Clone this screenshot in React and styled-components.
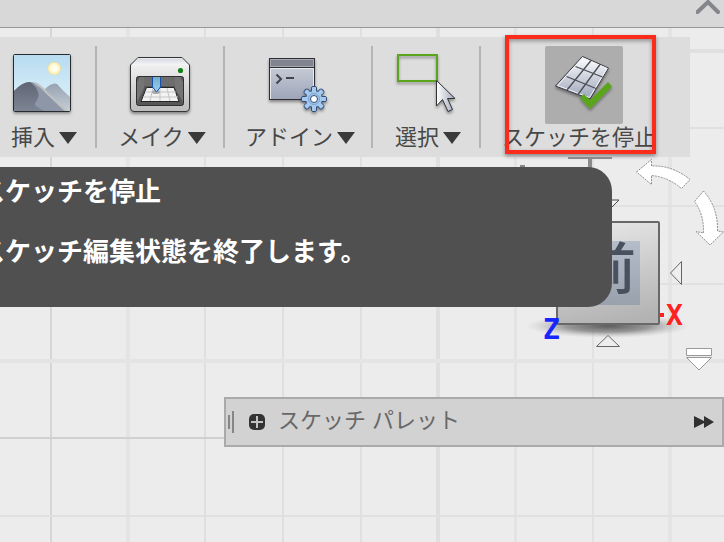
import React from "react";
import styled, { createGlobalStyle } from "styled-components";

const Global = createGlobalStyle`
  * { box-sizing: border-box; }
  body {
    margin: 0;
    overflow-x: hidden;
    background: #ececec;
    font-family: "Liberation Sans", "Noto Sans CJK JP", sans-serif;
  }
`;

const Page = styled.div`
  display: flex;
  flex-direction: column;
  min-height: 100vh;
`;

const TopBar = styled.header`
  display: flex;
  justify-content: flex-end;
  height: 28px;
  padding-right: 4px;
  background: #d8d8d8;
  border-bottom: 1px solid #969696;
`;

const PlainButton = styled.button`
  padding: 0;
  border: 0;
  background: none;
  color: inherit;
  font: inherit;
  cursor: pointer;
`;

const CollapseButton = styled(PlainButton)`
  display: flex;
  align-items: flex-start;
  width: 24px;
`;

const Workspace = styled.main`
  position: relative;
  flex: 1;
  padding-top: 9px;
  overflow: hidden;
`;

const Grid = styled.svg`
  position: absolute;
  inset: 0;
  width: 100%;
  height: 100%;
`;

const Toolbar = styled.nav`
  position: relative;
  display: grid;
  grid-template-columns: 97px 128px 148px 108px 1fr;
  margin-right: 34px;
  padding: 9px 0;
  background: #dddddd;
`;

const Tool = styled(PlainButton)`
  display: flex;
  flex-direction: column;
  align-items: center;
  height: 102px;
  padding-right: ${(p) => p.$inset || 0}px;
  border-right: ${(p) => (p.$last ? "0" : "2px solid #b5b5b5")};
  color: #484848;
  font-size: 22px;
  line-height: 28px;
  white-space: nowrap;
`;

const Tile = styled.svg`
  display: block;
  width: 78px;
  height: 78px;
  flex: none;
  border-radius: 2px;
  background: ${(p) => (p.$active ? "#adadad" : "none")};
`;

const Label = styled.span`
  display: flex;
  align-items: center;
  gap: 4px;
  padding-left: ${(p) => (p.$wide ? 0 : 4)}px;
  padding-right: ${(p) => (p.$wide ? 10 : 0)}px;
`;

const Caret = styled.span`
  width: 18px;
  height: 12px;
  background: #3a3a3a;
  clip-path: polygon(0 0, 100% 0, 50% 100%);
`;

const Highlight = styled.div`
  position: absolute;
  top: -2px;
  right: 34px;
  width: 151px;
  height: 119px;
  border: 4px solid #fb2c1c;
  box-shadow: 0 2px 4px rgba(0, 0, 0, 0.4), inset 0 2px 4px rgba(0, 0, 0, 0.35);
  pointer-events: none;
`;

const Tooltip = styled.div`
  position: absolute;
  top: 139px;
  left: -40px;
  right: 112px;
  height: 140px;
  padding: 10px 19px;
  border-radius: 0 24px 24px 0;
  background: #505050;
  color: #fff;
  font-size: 26px;
  font-weight: 700;
  line-height: 30px;
  white-space: nowrap;
`;

const TipTitle = styled.h1`
  margin: 0 0 30px;
  font: inherit;
`;

const TipText = styled.p`
  margin: 0;
`;

const Cube = styled.svg`
  position: absolute;
  top: 129px;
  right: 0;
  width: 224px;
  height: 223px;
  font-family: "Noto Sans CJK JP", sans-serif;
`;

const Palette = styled.section`
  position: relative;
  display: flex;
  align-items: center;
  height: 50px;
  margin: 240px 0 0 224px;
  padding: 0 8px 0 2px;
  border: 2px solid #aaaaaa;
  background: #d2d2d2;
  color: #686868;
`;

const Grip = styled.span`
  display: flex;
  align-items: center;
  gap: 2px;
  margin-right: 15px;

  &::before,
  &::after {
    content: "";
    width: 2px;
    height: 14px;
    background: #868686;
  }
  &::after { height: 22px; }
`;

const PaletteTitle = styled.h2`
  flex: 1;
  margin: 0 0 2px 13px;
  font-size: 22px;
  font-weight: 400;
  line-height: 26px;
`;

const IconButton = styled(PlainButton)`
  display: flex;
`;

const verticals = [
  [50, 2, "#d6d6d6"], [126, 4, "#e4e4e4"], [204, 2, "#dfdfdf"],
  [282, 2, "#dfdfdf"], [360, 2, "#e0e0e0"], [436, 4, "#dfdfdf"],
  [514, 3, "#e3e3e3"], [592, 2, "#e1e1e1"], [668, 4, "#e4e4e4"],
];
const horizontals = [
  [21, 4, "#e0e0e0"], [99, 2, "#e0e0e0"], [177, 2, "#e1e1e1"],
  [255, 2, "#e1e1e1"], [331, 4, "#e4e4e4"], [409, 2, "#d0d0d0"],
  [487, 2, "#e0e0e0"],
];

function GridLines() {
  return (
    <Grid aria-hidden="true">
      {verticals.map(([x, w, c]) => (
        <rect key={x} x={x} y="0" width={w} height="100%" fill={c} />
      ))}
      {horizontals.map(([y, h, c]) => (
        <rect key={y} x="0" y={y} width="100%" height={h} fill={c} />
      ))}
    </Grid>
  );
}

const Shadow = ({ id }) => (
  <filter id={id} x="-20%" y="-20%" width="140%" height="150%">
    <feDropShadow dx="0" dy="2" stdDeviation="1.5" floodOpacity="0.4" />
  </filter>
);

const Fade = ({ id, from, to }) => (
  <linearGradient id={id} x1="0" y1="0" x2="0" y2="1">
    <stop offset="0" stopColor={from} />
    <stop offset="1" stopColor={to} />
  </linearGradient>
);

function InsertIcon() {
  return (
    <Tile viewBox="3 46 78 78" aria-hidden="true">
      <defs>
        <Shadow id="s1" />
        <Fade id="sky" from="#b7dbf0" to="#e3f4fb" />
        <Fade id="hill" from="#5f6573" to="#7d8494" />
        <Fade id="far" from="#97a3b2" to="#c6ced6" />
        <radialGradient id="sun">
          <stop offset="0.4" stopColor="#fffdf0" />
          <stop offset="0.85" stopColor="#fff0b0" />
          <stop offset="1" stopColor="#ead994" />
        </radialGradient>
      </defs>
      <rect x="13.5" y="54.5" width="57" height="57" fill="url(#sky)" filter="url(#s1)" />
      <circle cx="54.3" cy="68.5" r="6.6" fill="url(#sun)" />
      <path d="M44 90Q52 82 57 84Q62 90 70 97V111H50Z" fill="url(#far)" />
      <path d="M29 82Q36 82 41 87L67 111H14V91Q22 83 29 82Z" fill="#8e97a8" />
      <path d="M14 91Q22 82 30 82Q36 86 38 92Q40 97 35 103Q33 106 45 111H14Z" fill="url(#hill)" />
      <path d="M35 83Q41 86 47 93L66 111" fill="none" stroke="#c0c2c2" strokeWidth="2" />
      <rect x="13.5" y="54.5" width="57" height="57" rx="1" fill="none" stroke="#282a2d" />
    </Tile>
  );
}

function MakeIcon() {
  return (
    <Tile viewBox="121 46 78 78" aria-hidden="true">
      <defs>
        <Shadow id="s2" />
        <Fade id="body" from="#f8f8f8" to="#bcbcbc" />
        <Fade id="lid" from="#d5d9e2" to="#f5f5f7" />
        <Fade id="nozzle" from="#74abc8" to="#9bd2ee" />
      </defs>
      <path d="M138 57.5H182L189.5 65V108Q189.5 111.500 186 111.500H134Q130.500 111.500 130.500 108V65Z" fill="url(#body)" stroke="#353535" filter="url(#s2)" />
      <path d="M138 58.500H182L188 65H132Z" fill="url(#lid)" />
      <circle cx="180.500" cy="70.500" r="2.600" fill="#158015" />
      <rect x="136.500" y="76.500" width="47" height="29" rx="2" fill="#575757" stroke="#303030" />
      <path d="M144 77H176V86H144Z" fill="#6d6d6d" />
      <path d="M137 102L144 88V77H140L137 82ZM183 102L175 88V77H180L183 82Z" fill="#757575" />
      <path d="M146.500 87.500H174L179 101.500H141Z" fill="#f2f2f2" stroke="#252525" />
      <path d="M145 92H176M143 97H178M153 88L150 101M160 88V101M167 88L170 101" stroke="#c5c5c5" strokeWidth="1" />
      <ellipse cx="156" cy="92" rx="4" ry="2" fill="#a8a8a8" />
      <path d="M152.500 77V87L156.500 92L160.500 87V77" fill="url(#nozzle)" stroke="#174fae" />
    </Tile>
  );
}

function AddinIcon() {
  const teeth = [0, 45, 90, 135, 180, 225, 270, 315];
  return (
    <Tile viewBox="259 46 78 78" aria-hidden="true">
      <defs>
        <Shadow id="s3" />
        <Fade id="term" from="#d2d5df" to="#9da5b8" />
      </defs>
      <g filter="url(#s3)">
        <rect x="269.500" y="58.500" width="45" height="41" fill="url(#term)" stroke="#2d2f35" />
      </g>
      <rect x="270.500" y="59.500" width="43" height="7" fill="#81848f" stroke="#a6a8b2" />
      <path d="M270 67.500H314" stroke="#2d2f35" />
      <path d="M270.500 99V68.500H313.500V99" fill="none" stroke="#e8eaf0" />
      <path d="M276.500 74.500L281 79L276.500 83.500M286 78H294" fill="none" stroke="#42444b" strokeWidth="2" />
      <g filter="url(#s3)">
        {teeth.map((a) => (
          <rect key={a} x="311.500" y="86.500" width="5" height="9" rx="1.500" fill="#a6c9ed" stroke="#304b77" transform={`rotate(${a} 314 99)`} />
        ))}
        <circle cx="314" cy="99" r="8.500" fill="#9dc2e8" stroke="#304b77" />
        {teeth.map((a) => (
          <rect key={a} x="312" y="87.500" width="4" height="7" fill="#a6c9ed" transform={`rotate(${a} 314 99)`} />
        ))}
      </g>
      <circle cx="314" cy="99" r="5.500" fill="none" stroke="#78a2d0" />
      <circle cx="314" cy="99" r="3.500" fill="#fff" stroke="#304b77" />
    </Tile>
  );
}

function SelectIcon() {
  return (
    <Tile viewBox="387 46 78 78" aria-hidden="true">
      <defs>
        <Shadow id="s4" />
        <linearGradient id="pointer">
          <stop offset="0" stopColor="#ffffff" />
          <stop offset="1" stopColor="#9fa7b9" />
        </linearGradient>
      </defs>
      <rect x="398" y="55" width="39" height="26" fill="none" stroke="#5aa51e" strokeWidth="2" filter="url(#s4)" />
      <path d="M436.500 80.500V106L442.500 99.500L448 111.500L452.500 109.500L447.500 98.500H455Z" fill="url(#pointer)" stroke="#303135" strokeLinejoin="round" filter="url(#s4)" />
    </Tile>
  );
}

function StopSketchIcon() {
  return (
    <Tile $active viewBox="545 46 78 78" aria-hidden="true">
      <defs>
        <Shadow id="s5" />
        <Fade id="sheet" from="#ffffff" to="#9ba4ba" />
      </defs>
      <path d="M582.500 56.500L608.500 68L590 99L555.500 86Z" fill="url(#sheet)" stroke="#393b40" strokeLinejoin="round" filter="url(#s5)" />
      <path d="M582.500 58L607 68.500L589.500 97.500L557.500 85.500Z" fill="none" stroke="#f2f4f8" />
      <path d="M575.500 66.500L602.500 77M566.500 76.500L596 88.500M591 60.500L567 90M600 64.500L578 94.500" fill="none" stroke="#4b4d52" strokeWidth="1.300" />
      <path d="M580 98L584 94L590 100L608 82L612 86.500L590 109Z" fill="#5aa51e" filter="url(#s5)" />
    </Tile>
  );
}

function ViewCube() {
  return (
    <Cube viewBox="500 157 224 223" role="img" aria-label="ビューキューブ">
      <defs>
        <linearGradient id="face" x1="0.3" y1="0" x2="0.5" y2="1">
          <stop offset="0" stopColor="#e6e6e6" />
          <stop offset="1" stopColor="#b3b3b3" />
        </linearGradient>
        <Fade id="patch" from="#b5bdca" to="#99a1ad" />
        <radialGradient id="ground">
          <stop offset="0" stopColor="#5c5c5c" />
          <stop offset="0.5" stopColor="#808080" stopOpacity="0.8" />
          <stop offset="1" stopColor="#bbb" stopOpacity="0" />
        </radialGradient>
      </defs>
      <path d="M568 157H612V159H592V169H588V159H568Z" fill="#8b8b8b" />
      <rect x="520" y="165" width="5" height="3" fill="#888" />
      <ellipse cx="608" cy="326" rx="82" ry="12" fill="url(#ground)" />
      <path d="M597 200H619L608 211Z" fill="#eee" stroke="#4a4a4a" />
      <rect x="557" y="222" width="102" height="102" rx="1" fill="url(#face)" stroke="#686868" strokeWidth="2" />
      <rect x="576" y="241" width="64" height="64" fill="url(#patch)" />
      <text x="608" y="289" fontSize="56" fontWeight="500" textAnchor="middle" fill="#49515e">前</text>
      <path d="M670.500 273L681.500 261.500V284.500Z" fill="#eee" stroke="#666" />
      <path d="M596.500 346.500H619.500L608 335.500Z" fill="#eee" stroke="#666" />
      <g fontSize="28" fontWeight="700" fontFamily="DejaVu Sans Mono">
        <rect x="660" y="313" width="4" height="4" fill="#ff2020" />
        <text x="666" y="325" fill="#ff2020">X</text>
        <text x="543" y="339" fill="#1626ff">Z</text>
      </g>
      <g fill="#fff" stroke="#8c8c8c" strokeDasharray="2 1">
        <path d="M636.500 172L651.500 159.500V166Q672 165 690 179.500L681.500 188.500Q668 177 651.500 175.500V184.500Z" />
        <path d="M703.500 191L694.500 201.500Q704 214 703.500 233L696 231.500L710 245L723.500 232L717.500 231Q718 207 703.500 191Z" />
      </g>
      <path d="M686.500 348.500H711.500V355.500H686.500ZM686.500 357.500H711.500L699 370Z" fill="#fff" stroke="#999" />
    </Cube>
  );
}

const menus = [
  { label: "挿入", Icon: InsertIcon, inset: 11 },
  { label: "メイク", Icon: MakeIcon },
  { label: "アドイン", Icon: AddinIcon },
  { label: "選択", Icon: SelectIcon },
];

export default function App() {
  return (
    <Page>
      <Global />
      <TopBar>
        <CollapseButton aria-label="折りたたむ">
          <svg width="24" height="16" viewBox="696 0 24 16" fill="none" stroke="#85868c" strokeWidth="4" strokeLinecap="round">
            <path d="M697.500 12L708 2L718 12" />
          </svg>
        </CollapseButton>
      </TopBar>
      <Workspace>
        <GridLines />
        <Toolbar aria-label="ツール">
          {menus.map(({ label, Icon, inset }) => (
            <Tool key={label} $inset={inset} aria-haspopup="menu">
              <Icon />
              <Label>
                {label}
                <Caret />
              </Label>
            </Tool>
          ))}
          <Tool $last $inset={3}>
            <StopSketchIcon />
            <Label $wide>スケッチを停止</Label>
          </Tool>
          <Highlight />
        </Toolbar>
        <ViewCube />
        <Tooltip role="tooltip">
          <TipTitle>スケッチを停止</TipTitle>
          <TipText>スケッチ編集状態を終了します。</TipText>
        </Tooltip>
        <Palette>
          <Grip />
          <IconButton aria-label="展開">
            <svg width="16" height="16" viewBox="0 0 16 16">
              <rect width="16" height="16" rx="5" fill="#343434" />
              <path d="M2 8H14M8 2V14" stroke="#c4c4c4" strokeWidth="2" />
            </svg>
          </IconButton>
          <PaletteTitle>スケッチ パレット</PaletteTitle>
          <IconButton aria-label="最小化">
            <svg width="20" height="12" viewBox="0 0 20 12" fill="#303030">
              <path d="M0 0L10 5V0L20 6L10 12V7L0 12Z" />
            </svg>
          </IconButton>
        </Palette>
      </Workspace>
    </Page>
  );
}
